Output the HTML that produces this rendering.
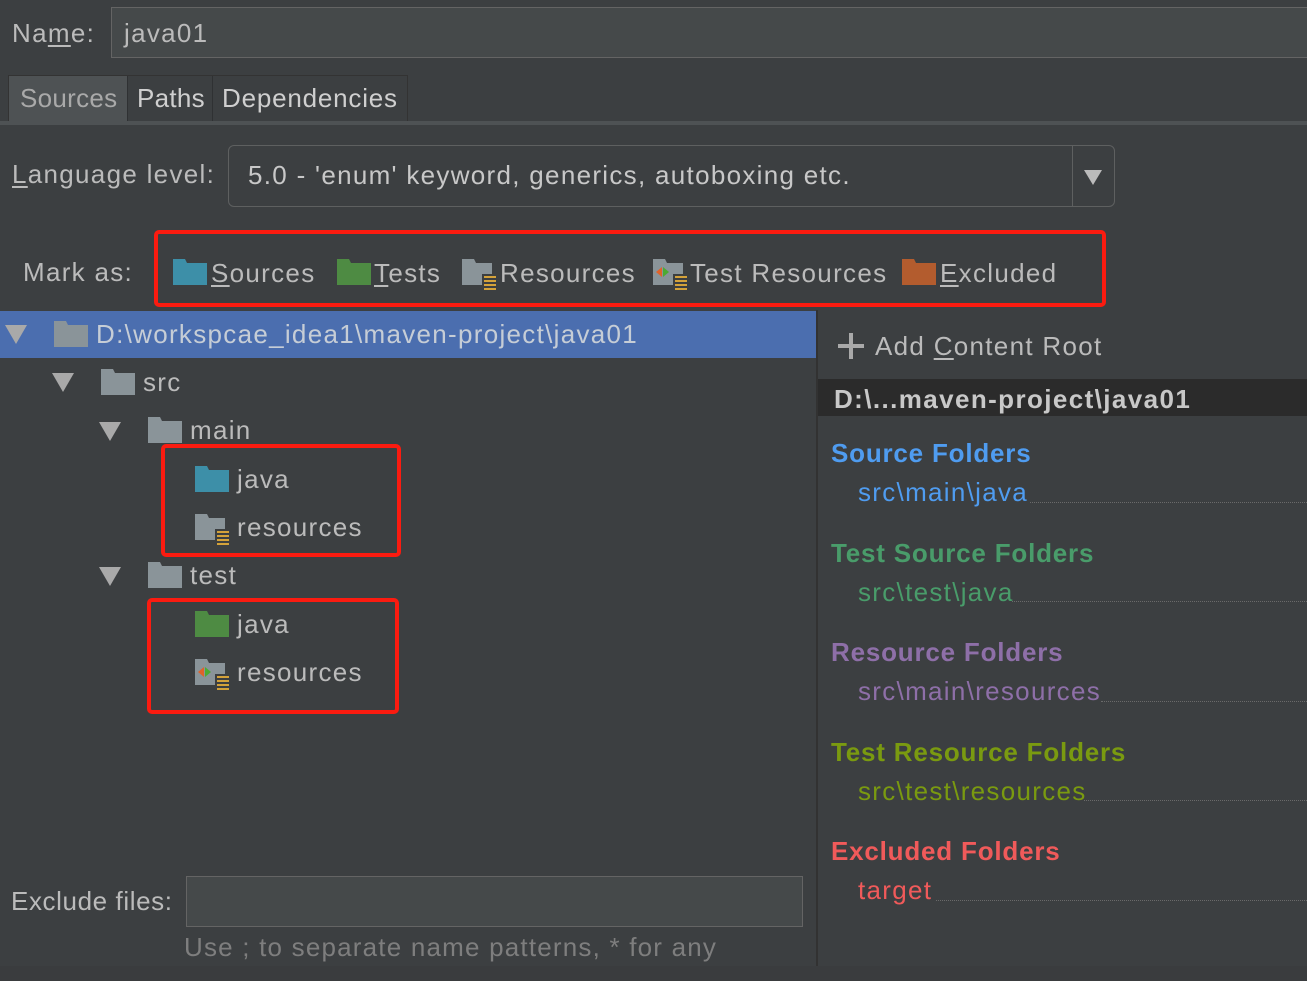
<!DOCTYPE html>
<html><head><meta charset="utf-8">
<style>
*{margin:0;padding:0;box-sizing:border-box}
body{width:1307px;height:981px;background:#3c3f41;font-family:"Liberation Sans",sans-serif;font-size:26px;color:#bbbbbb;position:relative;overflow:hidden;letter-spacing:1.3px}
.a{position:absolute;white-space:nowrap;line-height:30px}
.f{position:absolute}
u{text-decoration:underline;text-underline-offset:3px}
.b{font-weight:bold;letter-spacing:0.8px}
.dot{position:absolute;height:0;border-top:1px dotted #6a6a6a}
.tri{position:absolute;width:0;height:0;border-left:11px solid transparent;border-right:11px solid transparent;border-top:19px solid #a9a9a9}
</style></head><body>
<div class="a" style="left:12px;top:18px">Na<u>m</u>e:</div>
<div class="f" style="left:111px;top:7px;width:1200px;height:51px;background:#45494a;border:1px solid #646464"></div>
<div class="a" style="left:124px;top:18px">java01</div>
<div class="f" style="left:8px;top:75px;width:400px;height:47px;background:#3c3f41;border:1px solid #333"></div>
<div class="f" style="left:9px;top:76px;width:118px;height:47px;background:#4e5254"></div>
<div class="f" style="left:127px;top:76px;width:1px;height:46px;background:#2f3133"></div>
<div class="f" style="left:212px;top:76px;width:1px;height:46px;background:#2f3133"></div>
<div class="a" style="left:20px;top:83px;color:#a9a9a9;letter-spacing:0.3px">Sources</div>
<div class="a" style="left:137px;top:83px;color:#cfcfcf;letter-spacing:0.3px">Paths</div>
<div class="a" style="left:222px;top:83px;color:#cfcfcf;letter-spacing:0.8px">Dependencies</div>
<div class="f" style="left:0;top:121px;width:1307px;height:4px;background:#4e5254"></div>
<div class="a" style="left:12px;top:159px"><u>L</u>anguage level:</div>
<div class="f" style="left:228px;top:145px;width:887px;height:62px;border:1px solid #5e6060;border-radius:6px;background:#3c3f41"></div>
<div class="f" style="left:1072px;top:146px;width:1px;height:60px;background:#5e6060"></div>
<div class="f" style="left:1084px;top:170px;width:0;height:0;border-left:9px solid transparent;border-right:9px solid transparent;border-top:15px solid #bbb"></div>
<div class="a" style="left:248px;top:160px;color:#c8c8c8">5.0 - 'enum' keyword, generics, autoboxing etc.</div>
<div class="a" style="left:23px;top:257px">Mark as:</div>
<div class="f" style="left:154px;top:230px;width:952px;height:77px;border:4px solid #fb1b10;border-radius:5px"></div>
<svg class="f" style="left:172px;top:258px" width="36" height="28"><path d="M1 1h12l2 4h20v22H1z" fill="#3d8fa8"/></svg>
<div class="a" style="left:211px;top:258px"><u>S</u>ources</div>
<svg class="f" style="left:336px;top:258px" width="36" height="28"><path d="M1 1h12l2 4h20v22H1z" fill="#4e8b43"/></svg>
<div class="a" style="left:374px;top:258px"><u>T</u>ests</div>
<svg class="f" style="left:461px;top:258px" width="36" height="34"><path d="M1 1h12l2 4h16v22H1z" fill="#8a9499"/><rect x="21" y="16" width="14" height="17" fill="#3c3f41"/><g fill="#d4a23a"><rect x="23" y="18" width="12" height="2"/><rect x="23" y="22" width="12" height="2"/><rect x="23" y="26" width="12" height="2"/><rect x="23" y="30" width="12" height="2"/></g></svg>
<div class="a" style="left:500px;top:258px">Resources</div>
<svg class="f" style="left:652px;top:258px" width="36" height="34"><path d="M1 1h12l2 4h16v22H1z" fill="#8a9499"/><path d="M4 14l6-5v10z" fill="#e0622a"/><path d="M17 14l-6-5v10z" fill="#4caa33"/><rect x="21" y="16" width="14" height="17" fill="#3c3f41"/><g fill="#d4a23a"><rect x="23" y="18" width="12" height="2"/><rect x="23" y="22" width="12" height="2"/><rect x="23" y="26" width="12" height="2"/><rect x="23" y="30" width="12" height="2"/></g></svg>
<div class="a" style="left:690px;top:258px">Test Resources</div>
<svg class="f" style="left:901px;top:258px" width="36" height="28"><path d="M1 1h12l2 4h20v22H1z" fill="#b35c2e"/></svg>
<div class="a" style="left:940px;top:258px"><u>E</u>xcluded</div>
<div class="f" style="left:0;top:311px;width:817px;height:47px;background:#4b6eaf"></div>
<div class="tri" style="left:5px;top:325px"></div>
<svg class="f" style="left:53px;top:320px" width="36" height="28"><path d="M1 1h12l2 4h20v22H1z" fill="#8a9499"/></svg>
<div class="a" style="left:96px;top:319px;color:#c6cdd6">D:\workspcae_idea1\maven-project\java01</div>
<div class="tri" style="left:52px;top:373px"></div>
<svg class="f" style="left:100px;top:368px" width="36" height="28"><path d="M1 1h12l2 4h20v22H1z" fill="#8a9499"/></svg>
<div class="a" style="left:143px;top:367px">src</div>
<div class="tri" style="left:99px;top:422px"></div>
<svg class="f" style="left:147px;top:416px" width="36" height="28"><path d="M1 1h12l2 4h20v22H1z" fill="#8a9499"/></svg>
<div class="a" style="left:190px;top:415px">main</div>
<svg class="f" style="left:194px;top:465px" width="36" height="28"><path d="M1 1h12l2 4h20v22H1z" fill="#3d8fa8"/></svg>
<div class="a" style="left:237px;top:464px">java</div>
<svg class="f" style="left:194px;top:513px" width="36" height="34"><path d="M1 1h12l2 4h16v22H1z" fill="#8a9499"/><rect x="21" y="16" width="14" height="17" fill="#3c3f41"/><g fill="#d4a23a"><rect x="23" y="18" width="12" height="2"/><rect x="23" y="22" width="12" height="2"/><rect x="23" y="26" width="12" height="2"/><rect x="23" y="30" width="12" height="2"/></g></svg>
<div class="a" style="left:237px;top:512px">resources</div>
<div class="f" style="left:161px;top:444px;width:240px;height:113px;border:4px solid #fb1b10;border-radius:5px"></div>
<div class="tri" style="left:99px;top:567px"></div>
<svg class="f" style="left:147px;top:561px" width="36" height="28"><path d="M1 1h12l2 4h20v22H1z" fill="#8a9499"/></svg>
<div class="a" style="left:190px;top:560px">test</div>
<svg class="f" style="left:194px;top:610px" width="36" height="28"><path d="M1 1h12l2 4h20v22H1z" fill="#4e8b43"/></svg>
<div class="a" style="left:237px;top:609px">java</div>
<svg class="f" style="left:194px;top:658px" width="36" height="34"><path d="M1 1h12l2 4h16v22H1z" fill="#8a9499"/><path d="M4 14l6-5v10z" fill="#e0622a"/><path d="M17 14l-6-5v10z" fill="#4caa33"/><rect x="21" y="16" width="14" height="17" fill="#3c3f41"/><g fill="#d4a23a"><rect x="23" y="18" width="12" height="2"/><rect x="23" y="22" width="12" height="2"/><rect x="23" y="26" width="12" height="2"/><rect x="23" y="30" width="12" height="2"/></g></svg>
<div class="a" style="left:237px;top:657px">resources</div>
<div class="f" style="left:147px;top:598px;width:252px;height:116px;border:4px solid #fb1b10;border-radius:5px"></div>
<div class="a" style="left:11px;top:886px;letter-spacing:0.6px">Exclude files:</div>
<div class="f" style="left:186px;top:876px;width:617px;height:51px;background:#45494a;border:1px solid #646464"></div>
<div class="a" style="left:184px;top:932px;color:#7e7e7e;letter-spacing:1.2px">Use ; to separate name patterns, * for any</div>
<div class="f" style="left:816px;top:310px;width:2px;height:656px;background:#323232"></div>
<div class="f" style="left:838px;top:344px;width:26px;height:4px;background:#a9a9a9"></div>
<div class="f" style="left:849px;top:333px;width:4px;height:26px;background:#a9a9a9"></div>
<div class="a" style="left:875px;top:331px">Add <u>C</u>ontent Root</div>
<div class="f" style="left:818px;top:379px;width:489px;height:37px;background:#2b2b2b"></div>
<div class="a b" style="left:834px;top:384px;color:#c8c8c8;letter-spacing:1.4px">D:\...maven-project\java01</div>
<div class="a b" style="left:831px;top:438px;color:#4f9cf0">Source Folders</div>
<div class="a" style="left:858px;top:477px;color:#4f9cf0">src\main\java</div>
<div class="dot" style="left:1030px;top:502px;width:277px"></div>
<div class="a b" style="left:831px;top:538px;color:#499c6a">Test Source Folders</div>
<div class="a" style="left:858px;top:577px;color:#499c6a">src\test\java</div>
<div class="dot" style="left:1012px;top:601px;width:295px"></div>
<div class="a b" style="left:831px;top:637px;color:#8e6fa8">Resource Folders</div>
<div class="a" style="left:858px;top:676px;color:#8e6fa8">src\main\resources</div>
<div class="dot" style="left:1101px;top:701px;width:206px"></div>
<div class="a b" style="left:831px;top:737px;color:#7a9a10">Test Resource Folders</div>
<div class="a" style="left:858px;top:776px;color:#7a9a10">src\test\resources</div>
<div class="dot" style="left:1084px;top:800px;width:223px"></div>
<div class="a b" style="left:831px;top:836px;color:#f05a5a">Excluded Folders</div>
<div class="a" style="left:858px;top:875px;color:#f05a5a">target</div>
<div class="dot" style="left:936px;top:900px;width:371px"></div>
<div class="f" style="left:0;top:966px;width:1307px;height:15px;background:#3a3c3e"></div>
</body></html>
